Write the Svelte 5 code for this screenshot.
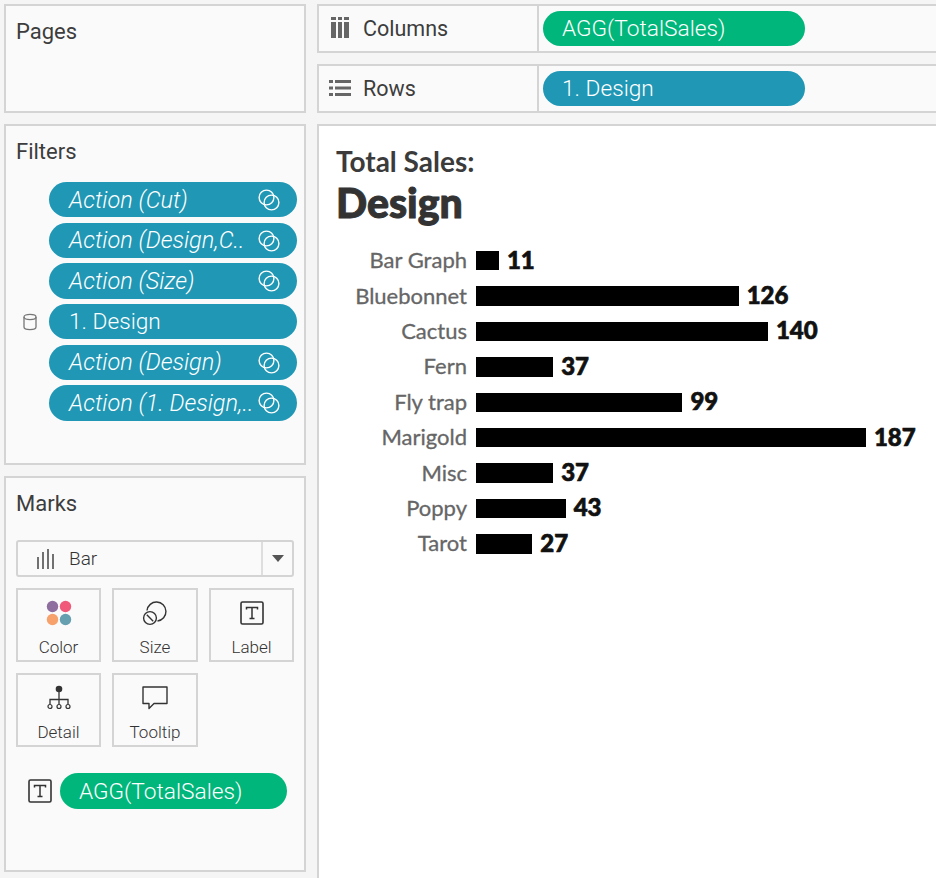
<script>
  const filters = [
    { text: 'Action (Cut)', action: true },
    { text: 'Action (Design,C..', action: true },
    { text: 'Action (Size)', action: true },
    { text: '1. Design', action: false },
    { text: 'Action (Design)', action: true },
    { text: 'Action (1. Design,..', action: true }
  ];
  const rows = [
    ['Bar Graph', 11], ['Bluebonnet', 126], ['Cactus', 140], ['Fern', 37], ['Fly trap', 99],
    ['Marigold', 187], ['Misc', 37], ['Poppy', 43], ['Tarot', 27]
  ];
</script>

{#snippet tIcon()}
  <svg class="t" viewBox="0 0 24 24" width="24" height="24">
    <rect x="1" y="1" width="22" height="22" rx="1.5" fill="none" stroke="#333" stroke-width="1.6"/>
    <path d="M6.5 8.5V6.5H17.5V8.5M12 6.5V17.5M9.5 17.5H14.5" fill="none" stroke="#333" stroke-width="1.5"/>
  </svg>
{/snippet}

<div class="page">
  <aside class="left">
    <section class="panel pages"><h2>Pages</h2></section>
    <section class="panel filters">
      <h2>Filters</h2>
      <div class="filter-list">
        {#each filters as f}
          <div class="filter-row">
            {#if !f.action}
              <svg class="db" viewBox="0 0 16 18" width="16" height="18">
                <path d="M2 4V14C2 15.6 5 16.6 8 16.6S14 15.6 14 14V4" fill="none" stroke="#777" stroke-width="1.3"/>
                <ellipse cx="8" cy="4" rx="6" ry="2.6" fill="none" stroke="#777" stroke-width="1.3"/>
              </svg>
            {/if}
            <div class="pill blue" class:italic={f.action}>
              <span>{f.text}</span>
              {#if f.action}
                <svg class="link" viewBox="0 0 22 22" width="22" height="22">
                  <circle cx="8.5" cy="8.5" r="7.4" fill="none" stroke="#fff" stroke-width="1.4"/>
                  <circle cx="13.5" cy="13.5" r="7.4" fill="none" stroke="#fff" stroke-width="1.4"/>
                </svg>
              {/if}
            </div>
          </div>
        {/each}
      </div>
    </section>
    <section class="panel marks">
      <h2>Marks</h2>
      <div class="select">
        <div class="select-main">
          <svg viewBox="0 0 20 22" width="20" height="22">
            <path d="M2 9V21M7 4V21M12 1V21M17 6V21" stroke="#444" stroke-width="1.5" fill="none"/>
          </svg>
          <span>Bar</span>
        </div>
        <div class="select-arrow"><i></i></div>
      </div>
      <div class="cards">
        <div class="card">
          <svg viewBox="0 0 26 26" width="26" height="26">
            <circle cx="6.5" cy="6.5" r="5.7" fill="#8e6e9f"/>
            <circle cx="19.5" cy="6.5" r="5.7" fill="#f0597a"/>
            <circle cx="6.5" cy="19.5" r="5.7" fill="#f7a16d"/>
            <circle cx="19.5" cy="19.5" r="5.7" fill="#669fb0"/>
          </svg>
          <span>Color</span>
        </div>
        <div class="card">
          <svg viewBox="0 0 26 26" width="26" height="26">
            <path d="M5 10.5A9.5 9.5 0 1 1 15.5 21" fill="none" stroke="#333" stroke-width="1.4"/>
            <circle cx="8" cy="18" r="6.4" fill="#fafafa" stroke="#333" stroke-width="1.4"/>
            <path d="M4.8 14.8L11.2 21.2" stroke="#333" stroke-width="1.4"/>
          </svg>
          <span>Size</span>
        </div>
        <div class="card">
          {@render tIcon()}
          <span>Label</span>
        </div>
        <div class="card">
          <svg viewBox="0 0 26 26" width="26" height="26">
            <circle cx="13" cy="4" r="3.3" fill="#333"/>
            <path d="M13 7V19M4 19V14.5H22V19" fill="none" stroke="#333" stroke-width="1.3"/>
            <circle cx="4" cy="21.5" r="2" fill="none" stroke="#333" stroke-width="1.2"/>
            <circle cx="13" cy="21.5" r="2" fill="none" stroke="#333" stroke-width="1.2"/>
            <circle cx="22" cy="21.5" r="2" fill="none" stroke="#333" stroke-width="1.2"/>
          </svg>
          <span>Detail</span>
        </div>
        <div class="card">
          <svg viewBox="0 0 26 26" width="26" height="26">
            <path d="M1 2H25V18.5H12L7 23.5V18.5H1Z" fill="none" stroke="#333" stroke-width="1.4" stroke-linejoin="round"/>
          </svg>
          <span>Tooltip</span>
        </div>
      </div>
      <div class="mark-field">
        {@render tIcon()}
        <div class="pill green wide"><span>AGG(TotalSales)</span></div>
      </div>
    </section>
  </aside>

  <main class="right">
    <div class="shelf">
      <div class="shelf-label">
        <svg class="cols-icon" viewBox="0 0 20 21" width="20" height="21">
          <path d="M1 0H6V3H1ZM8 0H12V3H8ZM14 0H19V3H14Z" fill="#666"/>
          <path d="M1 5H6V21H1ZM8 5H12V21H8ZM14 5H19V21H14Z" fill="#666"/>
        </svg>
        <span>Columns</span>
      </div>
      <div class="shelf-body"><div class="pill green shelf-pill"><span>AGG(TotalSales)</span></div></div>
    </div>
    <div class="shelf">
      <div class="shelf-label">
        <svg class="rows-icon" viewBox="0 0 22 18" width="22" height="18">
          <path d="M0 1H4V4H0ZM6 1H22V4H6ZM0 7.5H4V10.5H0ZM6 7.5H22V10.5H6ZM0 14H4V17H0ZM6 14H22V17H6Z" fill="#666"/>
        </svg>
        <span>Rows</span>
      </div>
      <div class="shelf-body"><div class="pill blue shelf-pill"><span>1. Design</span></div></div>
    </div>
    <section class="viz">
      <div class="title-1">Total Sales:</div>
      <div class="title-2">Design</div>
      <div class="chart">
        {#each rows as [name, value]}
          <div class="label">{name}</div>
          <div class="bar-cell">
            <div class="bar" style="width:{value * 2.085}px"></div>
            <span class="value">{value}</span>
          </div>
        {/each}
      </div>
    </section>
  </main>
</div>

<style>
  :global(body) { margin: 0; background: #f5f5f5; overflow: hidden; }
  .page {
    width: 936px; height: 878px; overflow: hidden; box-sizing: border-box;
    display: flex; gap: 11px; padding: 4px 0 0 4px;
    font-family: "Open Sans", Roboto, sans-serif; color: #444;
  }
  .left { width: 302px; flex: none; display: flex; flex-direction: column; gap: 11px; padding-bottom: 6px; box-sizing: border-box; }
  .panel { background: #fafafa; border: 2px solid #d4d4d4; box-sizing: border-box; padding: 13px 7px 0 10px; }
  h2 { margin: 0; font-size: 22px; line-height: 26px; font-weight: 400; color: #3d3d3d; font-family: Roboto, sans-serif; }
  .pages { height: 109px; }
  .filters { height: 341px; }
  .marks { flex: 1; }

  .filter-list { display: flex; flex-direction: column; gap: 5.4px; margin-top: 17px; }
  .filter-row { position: relative; padding-left: 33px; }
  .db { position: absolute; left: 6px; top: 9px; }
  .pill {
    height: 35.3px; border-radius: 18px; color: #fff; display: flex; align-items: center;
    padding-left: 20px; box-sizing: border-box; font-family: Roboto, sans-serif;
    font-size: 22.7px; font-weight: 300; position: relative; white-space: nowrap;
  }
  .blue { background: #1f97b5; }
  .green { background: #00b67a; }
  .italic { font-style: italic; font-size: 23.5px; }
  .link { position: absolute; right: 17px; top: 7px; }

  .select {
    display: flex; height: 37px; margin-top: 23px; border: 2px solid #d4d4d4; border-radius: 3px;
    width: 278px; box-sizing: border-box; background: #fafafa;
  }
  .select-main { flex: 1; display: flex; align-items: center; gap: 13px; padding-left: 18px; font-size: 19px; font-family: Roboto, sans-serif; font-weight: 300; color: #333; }
  .select-arrow { width: 31px; border-left: 2px solid #dedede; display: flex; align-items: center; justify-content: center; box-sizing: border-box; }
  .select-arrow i { width: 0; height: 0; border: 6px solid transparent; border-top: 7px solid #555; border-bottom: 0; }
  .cards { display: grid; grid-template-columns: 85px 86px 85px; column-gap: 11px; row-gap: 11px; margin-top: 11px; }
  .card {
    height: 74px; border: 2px solid #d4d4d4; box-sizing: border-box; display: flex; flex-direction: column;
    align-items: center; padding-top: 10px; gap: 11px; font-family: Roboto, sans-serif; font-weight: 300; font-size: 17px; line-height: 20px; color: #333;
  }
  .card svg { flex: none; height: 26px; }
  .mark-field { display: flex; align-items: center; gap: 8px; margin: 26px 0 0 12px; }
  .wide { width: 227px; height: 36px; padding-left: 19px; }

  .right { flex: 1; min-width: 0; display: flex; flex-direction: column; gap: 11px; }
  .shelf { height: 49px; display: flex; flex: none; background: #fafafa; border: solid #d4d4d4; border-width: 2px 0 2px 2px; box-sizing: border-box; }
  .shelf-label {
    width: 220px; flex: none; border-right: 2px solid #d4d4d4; box-sizing: border-box; display: flex; align-items: center;
    gap: 13px; padding-left: 11px; font-family: Roboto, sans-serif; font-size: 21.5px; color: #3d3d3d; font-weight: 400;
  }
  .shelf-label svg { flex: none; }
  .cols-icon { margin-top: -3px; }
  .rows-icon { margin: -1px -1px 0 -1px; }
  .shelf-body { display: flex; align-items: center; padding-left: 4px; }
  .shelf-pill { width: 262px; height: 35px; padding-left: 19px; }

  .viz { flex: 1; background: #fff; border: solid #d4d4d4; border-width: 2px 0 0 2px; padding: 18px 0 0 17px; font-family: Lato, sans-serif; }
  .title-1 { font-size: 28px; line-height: 34px; font-weight: 700; color: #3b3b3b; }
  .title-2 { font-size: 41px; line-height: 50px; font-weight: 900; color: #333; -webkit-text-stroke: 1px #333; }
  .chart { display: grid; grid-template-columns: 131px 1fr; column-gap: 9px; grid-auto-rows: 35.4px; margin-top: 14px; align-items: center; }
  .label { text-align: right; font-size: 22px; font-weight: 400; color: #666; -webkit-text-stroke: 0.3px #666; }
  .bar-cell { display: flex; align-items: center; gap: 8px; }
  .bar { height: 19.5px; background: #000; flex: none; margin-top: 2px; }
  .value { font-size: 24px; font-weight: 900; color: #111; line-height: 1; -webkit-text-stroke: 0.7px #111; }
</style>
